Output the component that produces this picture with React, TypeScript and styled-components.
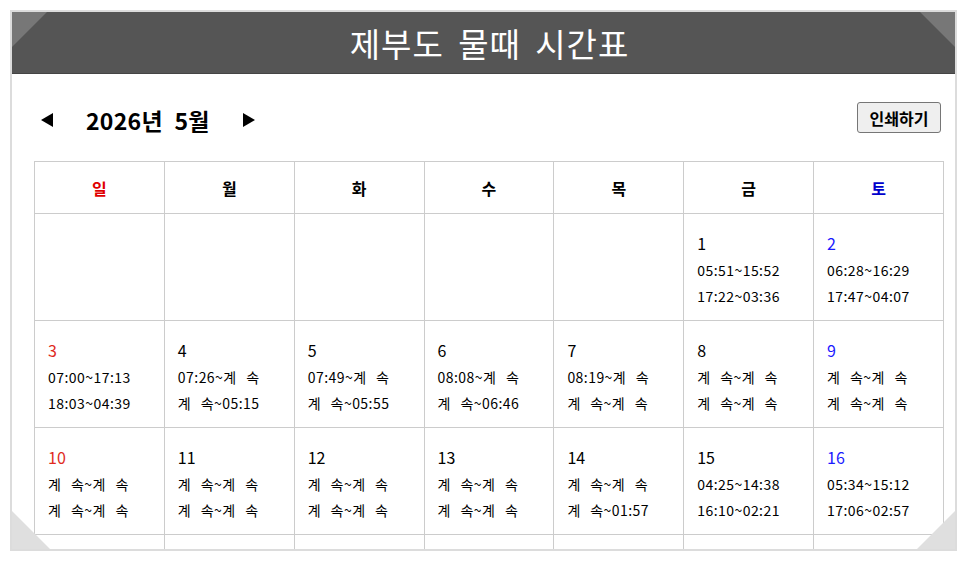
import React from "react";
import styled, { createGlobalStyle } from "styled-components";

const Global = createGlobalStyle`
  html, body { margin: 0; padding: 0; background: #fff; }
  body { font-family: "Noto Sans CJK KR", "Noto Sans", sans-serif; color: #111; }
`;

const Frame = styled.div`
  position: relative;
  box-sizing: border-box;
  margin: 10px;
  width: 947px;
  height: 541px;
  border: 2px solid #dcdcdc;
  background: #fff;
  overflow: hidden;
`;

const Header = styled.div`
  height: 61px;
  background: #555555;
  display: flex;
  align-items: center;
  justify-content: center;
  color: #fff;
  font-size: 33px;
  font-weight: 400;
  letter-spacing: 1px;
  word-spacing: 6px;
  padding-left: 12px;
  border-bottom: 1px solid #444;
`;

const Corner = styled.div<{ $pos: "tl" | "tr" | "bl" | "br" }>`
  position: absolute;
  width: ${(p) => (p.$pos === "tl" || p.$pos === "tr" ? "35px" : "38px")};
  height: ${(p) => (p.$pos === "tl" || p.$pos === "tr" ? "35px" : "38px")};
  background: ${(p) => (p.$pos === "tl" || p.$pos === "tr" ? "#777777" : "#dfdfdf")};
  ${(p) =>
    p.$pos === "tl"
      ? "top:0;left:0;clip-path:polygon(0 0,100% 0,0 100%);"
      : p.$pos === "tr"
      ? "top:0;right:0;clip-path:polygon(0 0,100% 0,100% 100%);"
      : p.$pos === "bl"
      ? "bottom:0;left:0;clip-path:polygon(0 0,0 100%,100% 100%);"
      : "bottom:0;right:0;clip-path:polygon(100% 0,100% 100%,0 100%);"}
`;

const Content = styled.div`
  padding: 28px 11px 0 22px;
`;

const Nav = styled.div`
  display: flex;
  align-items: center;
  height: 31px;
  margin-bottom: 28px;
`;

const MonthNav = styled.div`
  display: flex;
  align-items: center;
  gap: 32px;
  margin-left: 7px;
  flex: 1;
  padding-top: 4px;
`;

const Arrow = styled.button`
  border: 0;
  background: none;
  padding: 0;
  width: 13px;
  height: 14px;
  display: flex;
  cursor: pointer;
`;

const MonthTitle = styled.div`
  font-size: 23px;
  font-weight: 700;
  color: #000;
  letter-spacing: 0.3px;
  word-spacing: 6px;
`;

const PrintButton = styled.button`
  box-sizing: border-box;
  height: 31px;
  width: 84px;
  margin-right: 3px;
  background: #efefef;
  border: 1px solid #767676;
  border-radius: 3px;
  font-family: inherit;
  font-size: 16px;
  font-weight: 700;
  color: #000;
  padding: 0;
`;

const Table = styled.table`
  width: 910px;
  border-collapse: collapse;
  table-layout: fixed;
`;

const Th = styled.th<{ $color?: string }>`
  height: 51px;
  border: 1px solid #cccccc;
  font-size: 16px;
  font-weight: 700;
  color: ${(p) => p.$color || "#000"};
  text-align: center;
  padding: 0;
`;

const Td = styled.td`
  height: 107px;
  border: 1px solid #cccccc;
  vertical-align: middle;
  padding: 3px 0 0 13px;
  box-sizing: border-box;
`;

const DayNum = styled.div<{ $color?: string }>`
  font-size: 16px;
  line-height: 28px;
  color: ${(p) => p.$color || "#000"};
`;

const Time = styled.div`
  font-size: 14px;
  line-height: 26px;
  letter-spacing: 0.45px;
  word-spacing: 6px;
  color: #000;
`;

const Tri = ({ dir }: { dir: "l" | "r" }) => (
  <svg width="13" height="14" viewBox="0 0 13 14">
    {dir === "l" ? <polygon points="12,0 12,14 0,7" fill="#000" /> : <polygon points="1,0 1,14 13,7" fill="#000" />}
  </svg>
);

type Day = { d: number; t: [string, string] } | null;

const K = "계 속";
const weeks: Day[][] = [
  [null, null, null, null, null,
    { d: 1, t: ["05:51~15:52", "17:22~03:36"] },
    { d: 2, t: ["06:28~16:29", "17:47~04:07"] }],
  [{ d: 3, t: ["07:00~17:13", "18:03~04:39"] },
    { d: 4, t: [`07:26~${K}`, `${K}~05:15`] },
    { d: 5, t: [`07:49~${K}`, `${K}~05:55`] },
    { d: 6, t: [`08:08~${K}`, `${K}~06:46`] },
    { d: 7, t: [`08:19~${K}`, `${K}~${K}`] },
    { d: 8, t: [`${K}~${K}`, `${K}~${K}`] },
    { d: 9, t: [`${K}~${K}`, `${K}~${K}`] }],
  [{ d: 10, t: [`${K}~${K}`, `${K}~${K}`] },
    { d: 11, t: [`${K}~${K}`, `${K}~${K}`] },
    { d: 12, t: [`${K}~${K}`, `${K}~${K}`] },
    { d: 13, t: [`${K}~${K}`, `${K}~${K}`] },
    { d: 14, t: [`${K}~${K}`, `${K}~01:57`] },
    { d: 15, t: ["04:25~14:38", "16:10~02:21"] },
    { d: 16, t: ["05:34~15:12", "17:06~02:57"] }],
  [null, null, null, null, null, null, null],
];

const dayNames = ["일", "월", "화", "수", "목", "금", "토"];
const colorFor = (i: number, head: boolean) =>
  i === 0 ? (head ? "#e00000" : "#e02a1e") : i === 6 ? (head ? "#0000cc" : "#1a1aff") : undefined;

export default function App() {
  return (
    <>
      <Global />
      <Frame>
        <Header>제부도 물때 시간표</Header>
        <Corner $pos="tl" />
        <Corner $pos="tr" />
        <Content>
          <Nav>
            <MonthNav>
              <Arrow aria-label="이전 달"><Tri dir="l" /></Arrow>
              <MonthTitle>2026년 5월</MonthTitle>
              <Arrow aria-label="다음 달"><Tri dir="r" /></Arrow>
            </MonthNav>
            <PrintButton>인쇄하기</PrintButton>
          </Nav>
          <Table>
            <thead>
              <tr>
                {dayNames.map((n, i) => (
                  <Th key={n} $color={colorFor(i, true)}>{n}</Th>
                ))}
              </tr>
            </thead>
            <tbody>
              {weeks.map((w, wi) => (
                <tr key={wi}>
                  {w.map((day, i) => (
                    <Td key={i}>
                      {day && (
                        <>
                          <DayNum $color={colorFor(i, false)}>{day.d}</DayNum>
                          <Time>{day.t[0]}</Time>
                          <Time>{day.t[1]}</Time>
                        </>
                      )}
                    </Td>
                  ))}
                </tr>
              ))}
            </tbody>
          </Table>
        </Content>
        <Corner $pos="bl" />
        <Corner $pos="br" />
      </Frame>
    </>
  );
}
